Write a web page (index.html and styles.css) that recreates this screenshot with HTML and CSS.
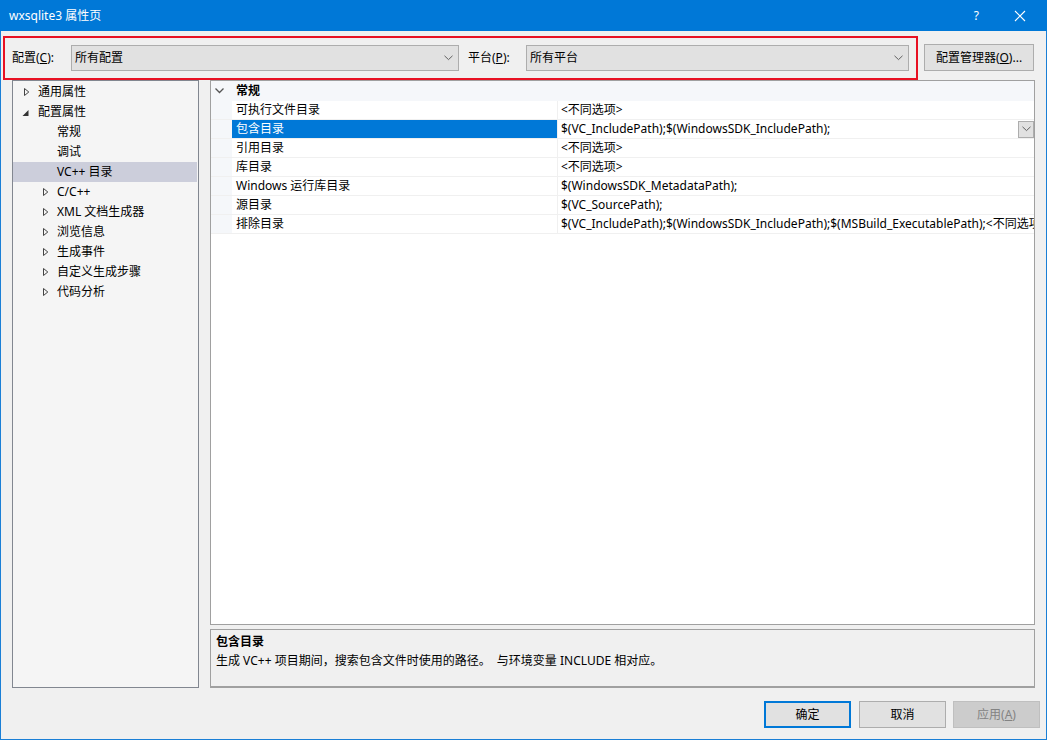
FILE: index.html
```html
<!DOCTYPE html>
<html lang="zh-CN">
<head>
<meta charset="utf-8">
<title>wxsqlite3 属性页</title>
<link rel="stylesheet" href="styles.css">
</head>
<body>
<div class="window">
  <div class="titlebar">
    <span class="title">wxsqlite3 属性页</span>
    <span class="help">?</span>
    <svg class="close" width="12" height="12" viewBox="0 0 12 12"><path d="M1 1 L11 11 M11 1 L1 11" stroke="#fff" stroke-width="1.1" fill="none"/></svg>
  </div>

  <div class="toolbar">
    <div class="hl-box">
      <span class="lbl lbl-config">配置(<u>C</u>):</span>
      <div class="combo combo-config">
        <span class="combo-text">所有配置</span>
        <svg class="chev" width="9" height="6" viewBox="0 0 9 6"><path d="M0.5 0.8 L4.5 4.6 L8.5 0.8" stroke="#606060" stroke-width="1" fill="none"/></svg>
      </div>
      <span class="lbl lbl-plat">平台(<u>P</u>):</span>
      <div class="combo combo-plat">
        <span class="combo-text">所有平台</span>
        <svg class="chev" width="9" height="6" viewBox="0 0 9 6"><path d="M0.5 0.8 L4.5 4.6 L8.5 0.8" stroke="#606060" stroke-width="1" fill="none"/></svg>
      </div>
    </div>
    <div class="btn btn-mgr">配置管理器(<u>O</u>)...</div>
  </div>

  <div class="main">
    <div class="tree">
      <div class="node l1"><svg class="exp" width="16" height="20" viewBox="0 0 16 20"><path d="M2.5 6.5 L6.8 10 L2.5 13.5 Z" stroke="#444" stroke-width="1" fill="none"/></svg><span>通用属性</span></div>
      <div class="node l1"><svg class="exp" width="16" height="20" viewBox="0 0 16 20"><path d="M6.5 8 L6.5 14 L0.5 14 Z" fill="#333"/></svg><span>配置属性</span></div>
      <div class="node l2 leaf"><span>常规</span></div>
      <div class="node l2 leaf"><span>调试</span></div>
      <div class="node l2 leaf sel"><span>VC++ 目录</span></div>
      <div class="node l2"><svg class="exp" width="16" height="20" viewBox="0 0 16 20"><path d="M2.5 6.5 L6.8 10 L2.5 13.5 Z" stroke="#444" stroke-width="1" fill="none"/></svg><span>C/C++</span></div>
      <div class="node l2"><svg class="exp" width="16" height="20" viewBox="0 0 16 20"><path d="M2.5 6.5 L6.8 10 L2.5 13.5 Z" stroke="#444" stroke-width="1" fill="none"/></svg><span>XML 文档生成器</span></div>
      <div class="node l2"><svg class="exp" width="16" height="20" viewBox="0 0 16 20"><path d="M2.5 6.5 L6.8 10 L2.5 13.5 Z" stroke="#444" stroke-width="1" fill="none"/></svg><span>浏览信息</span></div>
      <div class="node l2"><svg class="exp" width="16" height="20" viewBox="0 0 16 20"><path d="M2.5 6.5 L6.8 10 L2.5 13.5 Z" stroke="#444" stroke-width="1" fill="none"/></svg><span>生成事件</span></div>
      <div class="node l2"><svg class="exp" width="16" height="20" viewBox="0 0 16 20"><path d="M2.5 6.5 L6.8 10 L2.5 13.5 Z" stroke="#444" stroke-width="1" fill="none"/></svg><span>自定义生成步骤</span></div>
      <div class="node l2"><svg class="exp" width="16" height="20" viewBox="0 0 16 20"><path d="M2.5 6.5 L6.8 10 L2.5 13.5 Z" stroke="#444" stroke-width="1" fill="none"/></svg><span>代码分析</span></div>
    </div>

    <div class="right">
      <div class="grid">
        <div class="grid-head">
          <div class="gutter"><svg width="12" height="8" viewBox="0 0 12 8"><path d="M1.5 1.5 L5.5 5.5 L9.5 1.5" stroke="#555" stroke-width="1.3" fill="none"/></svg></div>
          <span class="head-text">常规</span>
        </div>
        <div class="row"><div class="gutter"></div><div class="name">可执行文件目录</div><div class="value">&lt;不同选项&gt;</div></div>
        <div class="row selected"><div class="gutter"></div><div class="name">包含目录</div><div class="value"><span>$(VC_IncludePath);$(WindowsSDK_IncludePath);</span><div class="dd"><svg width="9" height="6" viewBox="0 0 9 6"><path d="M0.5 0.8 L4.5 4.6 L8.5 0.8" stroke="#606060" stroke-width="1" fill="none"/></svg></div></div></div>
        <div class="row"><div class="gutter"></div><div class="name">引用目录</div><div class="value">&lt;不同选项&gt;</div></div>
        <div class="row"><div class="gutter"></div><div class="name">库目录</div><div class="value">&lt;不同选项&gt;</div></div>
        <div class="row"><div class="gutter"></div><div class="name">Windows 运行库目录</div><div class="value">$(WindowsSDK_MetadataPath);</div></div>
        <div class="row"><div class="gutter"></div><div class="name">源目录</div><div class="value">$(VC_SourcePath);</div></div>
        <div class="row"><div class="gutter"></div><div class="name">排除目录</div><div class="value">$(VC_IncludePath);$(WindowsSDK_IncludePath);$(MSBuild_ExecutablePath);&lt;不同选项&gt;</div></div>
      </div>
      <div class="desc">
        <div class="desc-title">包含目录</div>
        <div class="desc-text">生成 VC++ 项目期间，搜索包含文件时使用的路径。&nbsp; 与环境变量 INCLUDE 相对应。</div>
      </div>
    </div>
  </div>

  <div class="footer">
    <div class="btn btn-ok">确定</div>
    <div class="btn btn-cancel">取消</div>
    <div class="btn btn-apply disabled">应用(<u>A</u>)</div>
  </div>
</div>
</body>
</html>
```
FILE: styles.css
```css
* { box-sizing: border-box; }
html, body { margin: 0; padding: 0; }
body {
  width: 1047px;
  height: 740px;
  overflow: hidden;
  font-family: "Noto Sans", "Noto Sans CJK SC", sans-serif;
  font-size: 12px;
  color: #000;
  background: #f0f0f0;
}
.window {
  width: 1047px;
  height: 740px;
  border: 1px solid #1a7fd6;
  border-top: none;
  background: #f0f0f0;
  display: flex;
  flex-direction: column;
}
.titlebar {
  height: 31px;
  flex: none;
  background: #0078d7;
  color: #fff;
  display: flex;
  align-items: center;
  padding-left: 9px;
  margin: 0 -1px;
}
.title { flex: 1; font-size: 12px; line-height: 16px; }
.help { font-size: 12px; margin-right: 35px; line-height: 16px; }
.close { margin-right: 21px; }

.toolbar {
  display: flex;
  align-items: flex-start;
  margin-top: 5px;
  padding-left: 2px;
  height: 44px;
  flex: none;
}
.hl-box {
  width: 915px;
  height: 44px;
  border: 2px solid #e81123;
  display: flex;
  align-items: center;
  padding-left: 7px;
}
.lbl { line-height: 16px; white-space: nowrap; }
.lbl-config { width: 59px; }
.lbl-plat { width: 58px; margin-left: 9px; }
.combo {
  height: 26px;
  background: #e1e1e1;
  border: 1px solid #adadad;
  display: flex;
  align-items: center;
  padding-left: 3px;
  padding-right: 5px;
}
.combo-config { width: 388px; }
.combo-plat { width: 383px; }
.combo-text { flex: 1; line-height: 16px; }
.chev { display: block; }

.btn {
  height: 27px;
  background: #e1e1e1;
  border: 1px solid #adadad;
  display: flex;
  align-items: center;
  justify-content: center;
  line-height: 16px;
  white-space: nowrap;
}
.btn-mgr { width: 110px; margin-left: 6px; margin-top: 8px; }

.main {
  display: flex;
  padding: 0 11px;
  height: 608px;
  flex: none;
}
.tree {
  width: 187px;
  height: 608px;
  background: #f5f5f5;
  border: 1px solid #828790;
  padding-top: 1px;
}
.node {
  height: 20px;
  display: flex;
  align-items: center;
  line-height: 16px;
  white-space: nowrap;
}
.node .exp { flex: none; display: block; }
.node.l1 { padding-left: 9px; }
.node.l2 { padding-left: 28px; }
.node.leaf { padding-left: 44px; }
.node.sel { background: #cccedb; margin-right: 1px; }

.right {
  margin-left: 11px;
  width: 825px;
  display: flex;
  flex-direction: column;
}
.grid {
  height: 545px;
  background: #fff;
  border: 1px solid #a0a0a0;
  overflow: hidden;
}
.grid-head {
  height: 20px;
  background: #f5f7fa;
  display: flex;
  align-items: center;
}
.grid-head .gutter {
  display: flex;
  align-items: center;
  padding-left: 3px;
}
.head-text { font-weight: bold; padding-left: 4px; line-height: 16px; }
.gutter { width: 21px; flex: none; align-self: stretch; background: #f5f7fa; }
.row {
  height: 19px;
  display: flex;
  border-bottom: 1px solid #f0f0f0;
}
.name {
  width: 325px;
  flex: none;
  padding-left: 4px;
  line-height: 18px;
  white-space: nowrap;
}
.value {
  flex: 1;
  border-left: 1px solid #f0f0f0;
  padding-left: 3px;
  line-height: 18px;
  white-space: nowrap;
  overflow: hidden;
  display: flex;
  align-items: center;
}
.value span { flex: 1; }
.row.selected .name { background: #0078d7; color: #fff; }
.dd {
  width: 16px;
  height: 17px;
  flex: none;
  background: #e1e1e1;
  border: 1px solid #adadad;
  display: flex;
  align-items: center;
  justify-content: center;
}

.desc {
  margin-top: 4px;
  height: 59px;
  background: #f0f0f0;
  border: 1px solid #a0a0a0;
  border-bottom: 2px solid #a0a0a0;
  padding: 2px 5px 0;
}
.desc-title { font-weight: bold; line-height: 19px; }
.desc-text { line-height: 19px; white-space: nowrap; }

.footer {
  display: flex;
  justify-content: flex-end;
  margin-top: 13px;
  padding-right: 6px;
}
.footer .btn { width: 87px; }
.btn-ok { border: 2px solid #0078d7; }
.btn-cancel { margin-left: 8px; }
.btn-apply { margin-left: 7px; }
.btn.disabled { background: #cccccc; border-color: #bfbfbf; color: #838383; }
```
